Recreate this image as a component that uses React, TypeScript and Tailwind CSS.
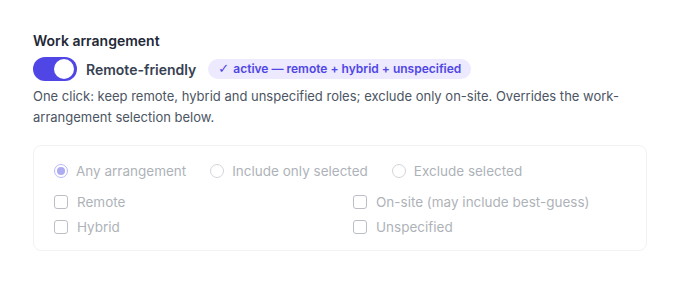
import { useState } from "react";

const arrangements = ["Remote", "On-site (may include best-guess)", "Hybrid", "Unspecified"];
const modes = ["Any arrangement", "Include only selected", "Exclude selected"];

export default function App() {
  const [remoteFriendly, setRemoteFriendly] = useState(true);
  const [mode, setMode] = useState("Any arrangement");

  return (
    <div className="min-h-screen bg-white font-['Inter',sans-serif] antialiased">
      <div className="w-[647px] pl-[33px] pt-[31px]">
        <h3 className="text-[14px] leading-5 font-semibold text-[#1f2937]">Work arrangement</h3>

        <div className="mt-[6px] flex h-6 items-center">
          <button
            type="button"
            onClick={() => setRemoteFriendly(!remoteFriendly)}
            className="relative h-6 w-11 rounded-full bg-[#4f46e5]"
            aria-label="Remote-friendly"
          >
            <span className="absolute top-[2px] right-[3px] h-5 w-5 rounded-full bg-white" />
          </button>
          <span className="ml-[9px] text-[14px] font-semibold text-[#374151]">Remote-friendly</span>
          <span className="ml-3 flex h-5 items-center rounded-full bg-[#ede9fe] px-2.5 text-[12px] font-semibold text-[#4f46e5]">
            <span className="mr-1 font-['DejaVu_Sans',sans-serif] text-[13px] font-bold">✓</span>
            active — remote + hybrid + unspecified
          </span>
        </div>

        <p className="mt-[5px] text-[13px] leading-[21px] text-[#4b5563]">
          One click: keep remote, hybrid and unspecified roles; exclude only on-site. Overrides the work-arrangement
          selection below.
        </p>

        <div className="mt-[17px] rounded-lg border border-[#f1f2f4] px-5 pt-[15px] pb-[13px]">
          <div className="opacity-45">
            <div className="flex h-5 items-center gap-6">
              {modes.map((m) => (
                <label
                  key={m}
                  onClick={() => setMode(m)}
                  className="flex items-center gap-2 text-[13.5px] text-[#4b5563]"
                >
                  {mode === m ? (
                    <span className="flex h-[14px] w-[14px] items-center justify-center rounded-full border border-[#6366f1]">
                      <span className="h-2 w-2 rounded-full bg-[#4f46e5]" />
                    </span>
                  ) : (
                    <span className="h-[14px] w-[14px] rounded-full border border-[#9ca3af]" />
                  )}
                  {m}
                </label>
              ))}
            </div>
            <div className="mt-[11px] grid grid-cols-2 gap-x-[26px] gap-y-[5px]">
              {arrangements.map((a) => (
                <label key={a} className="flex h-5 items-center gap-[9px] text-[13.5px] text-[#4b5563]">
                  <span className="h-[14px] w-[14px] rounded-[3px] border border-[#6b7280]" />
                  {a}
                </label>
              ))}
            </div>
          </div>
        </div>
      </div>
    </div>
  );
}
